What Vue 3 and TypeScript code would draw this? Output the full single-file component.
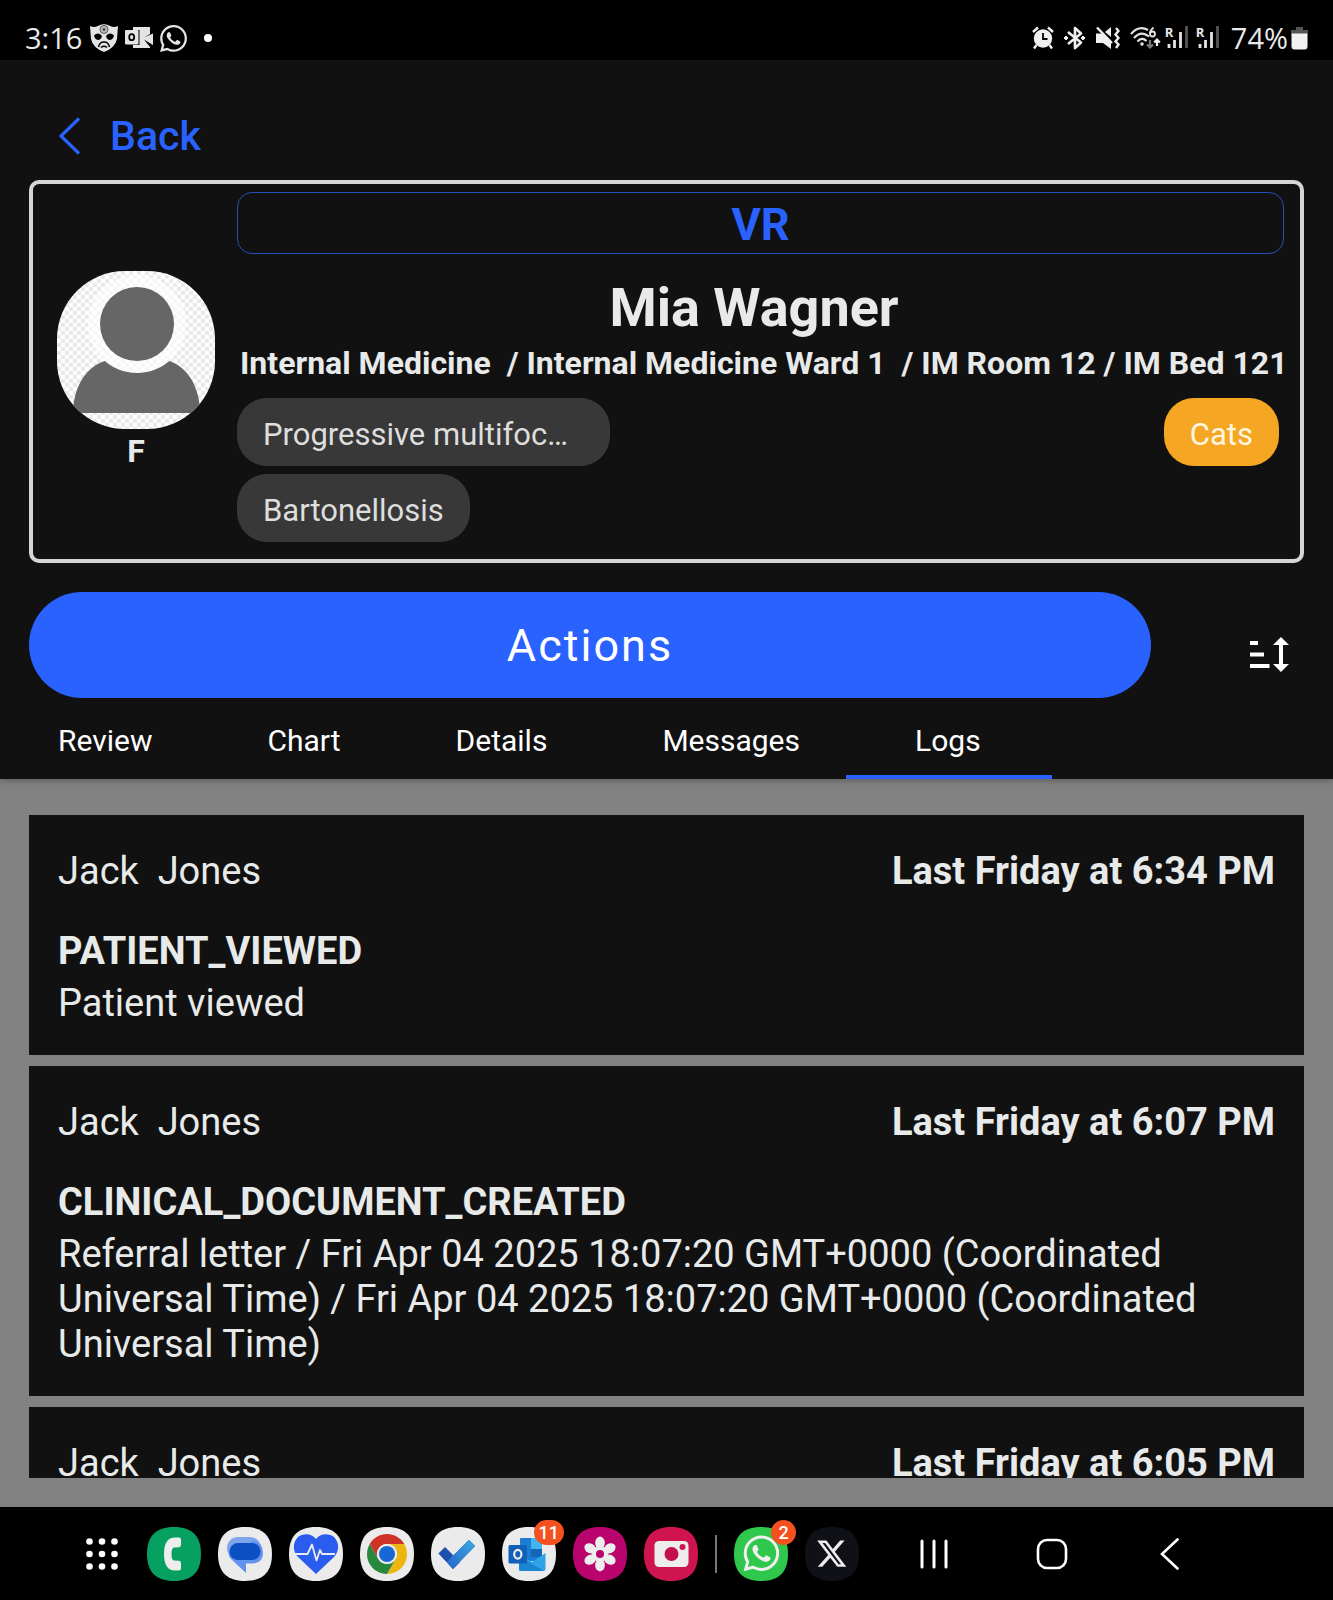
<script setup lang="ts">
import { ref } from 'vue'

interface LogEntry {
  id: number
  author: string
  time: string
  type?: string
  detail?: string
}

const tabs = ['Review', 'Chart', 'Details', 'Messages', 'Logs']
const activeTab = ref('Logs')

const location = 'Internal Medicine  / Internal Medicine Ward 1  / IM Room 12 / IM Bed 121'
const conditions = [
  { label: 'Progressive multifoc…', long: true },
  { label: 'Bartonellosis', long: false },
]
const allergies = ['Cats']

const logs: LogEntry[] = [
  {
    id: 1,
    author: 'Jack  Jones',
    time: 'Last Friday at 6:34 PM',
    type: 'PATIENT_VIEWED',
    detail: 'Patient viewed',
  },
  {
    id: 2,
    author: 'Jack  Jones',
    time: 'Last Friday at 6:07 PM',
    type: 'CLINICAL_DOCUMENT_CREATED',
    detail:
      'Referral letter / Fri Apr 04 2025 18:07:20 GMT+0000 (Coordinated Universal Time) / Fri Apr 04 2025 18:07:20 GMT+0000 (Coordinated Universal Time)',
  },
  {
    id: 3,
    author: 'Jack  Jones',
    time: 'Last Friday at 6:05 PM',
  },
]

const squircle = 'M27 0C45 0 54 9 54 27S45 54 27 54 0 45 0 27 9 0 27 0Z'
const whatsapp =
  'M17.472 14.382c-.297-.149-1.758-.867-2.03-.967-.273-.099-.471-.148-.67.15-.197.297-.767.966-.94 1.164-.173.199-.347.223-.644.075-.297-.15-1.255-.463-2.39-1.475-.883-.788-1.48-1.761-1.653-2.059-.173-.297-.018-.458.13-.606.134-.133.298-.347.446-.52.149-.174.198-.298.298-.497.099-.198.05-.371-.025-.52-.075-.149-.669-1.612-.916-2.207-.242-.579-.487-.5-.669-.51-.173-.008-.371-.01-.57-.01-.198 0-.52.074-.792.372-.272.297-1.04 1.016-1.04 2.479 0 1.462 1.065 2.875 1.213 3.074.149.198 2.096 3.2 5.077 4.487.709.306 1.262.489 1.694.625.712.227 1.36.195 1.871.118.571-.085 1.758-.719 2.006-1.413.248-.694.248-1.289.173-1.413-.074-.124-.272-.198-.57-.347m-5.421 7.403h-.004a9.87 9.87 0 01-5.031-1.378l-.361-.214-3.741.982.998-3.648-.235-.374a9.86 9.86 0 01-1.51-5.26c.001-5.45 4.436-9.884 9.888-9.884 2.64 0 5.122 1.03 6.988 2.898a9.825 9.825 0 012.893 6.994c-.003 5.45-4.437 9.884-9.885 9.884m8.413-18.297A11.815 11.815 0 0012.05 0C5.495 0 .16 5.335.157 11.892c0 2.096.547 4.142 1.588 5.945L.057 24l6.305-1.654a11.882 11.882 0 005.683 1.448h.005c6.554 0 11.89-5.335 11.893-11.893a11.821 11.821 0 00-3.48-8.413z'
const petals = [0, 60, 120, 180, 240, 300]
</script>

<template>
  <div class="screen">
    <div class="status">
      <div class="status-left">
        <span>3:16</span>
        <svg width="28" height="28" viewBox="0 0 28 28" class="mask">
          <path d="M0 2Q5 4 9 1.500Q14-1 19 1.500Q23 4 28 2L27 15Q25 24 14 28Q3 24 1 15Z" fill="#e4e4e4" />
          <circle cx="14" cy="5.500" r="4" fill="#bbb" stroke="#555" stroke-width="1" />
          <circle cx="14" cy="5.500" r="1.300" fill="#333" />
          <path d="M4 11.500Q8 7.500 12 12Q11 16 8 16Q5 15.500 4 11.500ZM24 11.500Q20 7.500 16 12Q17 16 20 16Q23 15.500 24 11.500Z" fill="#000" />
          <path d="M8.500 23Q9.500 18 14 18T19.500 23M11 23.500Q14 21 17 23.500" fill="none" stroke="#000" stroke-width="1.500" />
        </svg>
        <svg width="28" height="22" viewBox="0 0 28 22" class="mail">
          <path d="M8 0H25V7L19 10.500L28 6.500V18L19 12.500L25 20V21H8V18H14.500V3H8Z" fill="#e4e4e4" />
          <rect x="0" y="3" width="13.500" height="14.500" rx="1" fill="#e4e4e4" />
          <ellipse cx="6.700" cy="10.200" rx="2.500" ry="3" fill="none" stroke="#000" stroke-width="1.800" />
        </svg>
        <svg width="27" height="27" viewBox="0 0 24 24" class="wa"><path :d="whatsapp" fill="#e4e4e4" /></svg>
        <i class="dot"></i>
      </div>
      <div class="status-right">
        <svg width="22" height="24" viewBox="0 0 22 24">
          <circle cx="11" cy="12.500" r="9.200" fill="#f0f0f0" />
          <path d="M1 6L6 1.500M21 6L16 1.500M4.500 19L2 22.500M17.500 19L20 22.500" stroke="#f0f0f0" stroke-width="2.400" />
          <path d="M11 7V13H15.500" fill="none" stroke="#000" stroke-width="1.800" />
        </svg>
        <svg width="22" height="24" viewBox="0 0 22 24">
          <path d="M4 6L17 16.500L11 22V2L17 7.500L4 18" fill="none" stroke="#f0f0f0" stroke-width="2.600" stroke-linejoin="round" />
          <path d="M0 12L2 10L4 12L2 14ZM17 12L19 10L21 12L19 14Z" fill="#f0f0f0" stroke="#f0f0f0" />
        </svg>
        <svg width="24" height="24" viewBox="0 0 24 24">
          <path d="M0 7.500H6L15 15.500V23L7 17H0ZM9 6L15 1V11Z" fill="#f0f0f0" />
          <path d="M1 1.500L16 17" stroke="#f0f0f0" stroke-width="2.400" />
          <path d="M20 2L22.500 5L19.500 8.500L22.500 12L19.500 15.500L22.500 18.500L20 22" fill="none" stroke="#f0f0f0" stroke-width="2.400" />
        </svg>
        <svg width="31" height="24" viewBox="0 0 31 24" class="wifi">
          <path d="M1 8Q9-1 18 4M4 12Q11 4 19 10.500M7.500 15.500Q12 10.500 16.500 15" fill="none" stroke="#e4e4e4" stroke-width="2.200" />
          <circle cx="12" cy="18" r="1.800" fill="#e4e4e4" />
          <path d="M23.500 1.500Q19.500 5 20 8" fill="none" stroke="#e4e4e4" stroke-width="1.800" />
          <circle cx="22.500" cy="8" r="2.500" fill="none" stroke="#e4e4e4" stroke-width="1.800" />
          <path d="M20 14V21M17 18.500L20 21.500L23 18.500" fill="none" stroke="#777" stroke-width="2.200" />
          <path d="M27 20V14M24.200 16.500L27 13.500L29.800 16.500" fill="none" stroke="#f0f0f0" stroke-width="2.200" />
        </svg>
        <span v-for="n in 2" :key="n" class="signal">
          <b>R</b>
          <svg width="24" height="24" viewBox="0 0 24 24">
            <path d="M4 18V22M9.500 14V22M15.500 6V22" stroke="#e4e4e4" stroke-width="2.800" />
            <path d="M21.500 0V22" stroke="#555" stroke-width="2.800" />
          </svg>
        </span>
        <span class="percent">74%</span>
        <svg width="17" height="24" viewBox="0 0 17 24">
          <path d="M5 1H12V4H17V9H0V4H5Z" fill="#555" />
          <path d="M1 8H16V21Q16 23 14 23H3Q1 23 1 21Z" fill="#f2f2f2" stroke="#f2f2f2" />
        </svg>
      </div>
    </div>

    <header class="header">
      <button class="back" type="button">
        <svg width="22" height="38" viewBox="0 0 22 38">
          <path d="M20 1.500L2 19L20 36.500" fill="none" stroke="#2962ff" stroke-width="3.200" />
        </svg>
        Back
      </button>

      <section class="patient">
        <div class="identity">
          <svg class="avatar" viewBox="0 0 158 158" width="158" height="158">
            <defs>
              <pattern id="checks" width="8" height="8" patternUnits="userSpaceOnUse">
                <rect width="8" height="8" fill="#fff" />
                <path d="M0 0H4V4H0ZM4 4H8V8H4Z" fill="#e9e9e9" />
              </pattern>
              <mask id="neck">
                <rect width="158" height="158" fill="#fff" />
                <circle cx="80" cy="53" r="49" fill="#000" />
              </mask>
            </defs>
            <rect width="158" height="158" fill="url(#checks)" />
            <circle cx="80" cy="53" r="49" fill="#fff" opacity=".6" />
            <circle cx="80" cy="53" r="37" fill="#666" />
            <path d="M16 142C16 112 34 88 60 88H100C126 88 143 112 143 142Z" fill="#666" mask="url(#neck)" />
          </svg>
          <strong>F</strong>
        </div>
        <div class="summary">
          <div class="code">VR</div>
          <h1>Mia Wagner</h1>
          <p class="location">{{ location }}</p>
          <div class="chips">
            <div class="chip-column">
              <span v-for="c in conditions" :key="c.label" class="chip" :class="{ long: c.long }">{{ c.label }}</span>
            </div>
            <div class="chip-column">
              <span v-for="a in allergies" :key="a" class="chip allergy">{{ a }}</span>
            </div>
          </div>
        </div>
      </section>

      <div class="actions-row">
        <button class="actions" type="button">Actions</button>
        <button class="sort" type="button" aria-label="Sort">
          <svg width="40" height="36" viewBox="0 0 40 36">
            <path d="M0 4H8V8H0ZM0 15.500H14V19.500H0ZM0 27H19.500V31H0Z" fill="#fff" />
            <path d="M31 0L39 8H33V27H39L31 35L23 27H29V8H23Z" fill="#fff" />
          </svg>
        </button>
      </div>

      <nav class="tabs">
        <button
          v-for="tab in tabs"
          :key="tab"
          type="button"
          class="tab"
          :class="{ active: tab === activeTab }"
          @click="activeTab = tab"
        >
          {{ tab }}
        </button>
      </nav>
    </header>

    <main class="content">
      <div class="log-list">
        <article v-for="log in logs" :key="log.id" class="log">
          <div class="log-head">
            <span class="author">{{ log.author }}</span>
            <strong>{{ log.time }}</strong>
          </div>
          <h2 v-if="log.type">{{ log.type }}</h2>
          <p v-if="log.detail">{{ log.detail }}</p>
        </article>
      </div>
    </main>

    <footer class="taskbar">
      <div class="apps">
        <button type="button" class="drawer" aria-label="All apps">
          <svg width="32" height="32" viewBox="0 0 32 32" fill="#fff">
            <template v-for="y in 3" :key="y">
              <circle v-for="x in 3" :key="x" :cx="x * 12.5 - 9" :cy="y * 12.5 - 9" r="3.300" />
            </template>
          </svg>
        </button>
        <button type="button" class="app" aria-label="Phone">
          <svg viewBox="0 0 54 54">
            <path :d="squircle" fill="#06a060" />
            <path d="M28 10.500H32Q34 10.500 34 12.500V18Q34 20 32 20.300L27 20.500Q24.500 21 24.500 27T27 33.500L32 33.700Q34 34 34 36V41.500Q34 43.500 32 43.500H28Q17 43.500 17 27T28 10.500Z" fill="#ededed" />
          </svg>
        </button>
        <button type="button" class="app" aria-label="Messages">
          <svg viewBox="0 0 54 54">
            <path :d="squircle" fill="#ebebeb" />
            <rect x="9" y="10" width="34" height="22" rx="11" fill="#7ea4ea" />
            <path d="M11 26L35 14Q45 15 45 26Q45 36 35 36.500H28V46L13 32Q10 29 11 26Z" fill="#6391ee" />
            <rect x="11.500" y="16" width="31" height="17" rx="8.500" fill="#0b50c2" />
          </svg>
        </button>
        <button type="button" class="app" aria-label="Health">
          <svg viewBox="0 0 54 54">
            <path :d="squircle" fill="#ebebeb" />
            <path d="M27 12C31 6 40 6 45 10C51 16 50 25 45 30L27 47L9 30C4 25 3 16 9 10C14 6 23 6 27 12Z" fill="#2a5cf0" />
            <path d="M5 27H18.500L23 17.500L27.500 33.500L31 23L33 27H46" fill="none" stroke="#ebebeb" stroke-width="1.800" stroke-linejoin="round" />
          </svg>
        </button>
        <button type="button" class="app" aria-label="Chrome">
          <svg viewBox="0 0 54 54">
            <path :d="squircle" fill="#ebebeb" />
            <path d="M9.700 17A20 20 0 0 1 44.300 17H27A10 10 0 0 0 18.300 32Z" fill="#cf3226" />
            <path d="M44.300 17A20 20 0 0 1 27 47L35.700 32A10 10 0 0 0 27 17Z" fill="#ecb50f" />
            <path d="M27 47A20 20 0 0 1 9.700 17L18.300 32A10 10 0 0 0 35.700 32Z" fill="#27893e" />
            <circle cx="27" cy="27" r="10" fill="#ebebeb" />
            <circle cx="27" cy="27" r="8" fill="#1768d2" />
          </svg>
        </button>
        <button type="button" class="app" aria-label="To Do">
          <svg viewBox="0 0 54 54">
            <defs>
              <linearGradient id="tick" x1="0" y1="1" x2="1" y2="0">
                <stop offset="0" stop-color="#2466c8" />
                <stop offset="1" stop-color="#3fa9e4" />
              </linearGradient>
            </defs>
            <path :d="squircle" fill="#ebebeb" />
            <path d="M8 26.500L14 20.500L28.500 35L22 41.500Z" fill="#1c4fae" stroke="#1c4fae" stroke-linejoin="round" />
            <path d="M16 35L38 13L44 19L22 41.500Z" fill="url(#tick)" stroke="url(#tick)" stroke-linejoin="round" />
          </svg>
        </button>
        <button type="button" class="app" aria-label="Outlook">
          <svg viewBox="0 0 54 54">
            <path :d="squircle" fill="#ebebeb" />
            <rect x="18" y="11" width="22" height="23" rx="1" fill="#1a7fd4" />
            <path d="M29 11H40V22H29Z" fill="#42b4ee" />
            <path d="M29 22H40V30H29Z" fill="#1466b8" />
            <path d="M17 27L30 35L43.500 26V42Q43.500 44 41.500 44H19Q17 44 17 42Z" fill="#2ea3e6" />
            <path d="M17 29L42 44H19Q17 44 17 42Z" fill="#1b87d2" />
            <rect x="6.500" y="18" width="18.500" height="18.500" rx="1.500" fill="#1161b8" />
            <ellipse cx="15.800" cy="27.200" rx="3.600" ry="4.400" fill="none" stroke="#ededed" stroke-width="2.200" />
          </svg>
          <span class="badge">11</span>
        </button>
        <button type="button" class="app" aria-label="Gallery">
          <svg viewBox="0 0 54 54">
            <path :d="squircle" fill="#b8046c" />
            <ellipse v-for="a in petals" :key="a" cx="27" cy="15.800" rx="4.800" ry="6.200" fill="#ededed" :transform="`rotate(${a} 27 27)`" />
            <circle cx="27" cy="27" r="8" fill="#ededed" />
            <circle cx="27" cy="27" r="4" fill="#b8046c" />
          </svg>
        </button>
        <button type="button" class="app" aria-label="Camera">
          <svg viewBox="0 0 54 54">
            <path :d="squircle" fill="#d01450" />
            <rect x="10.500" y="14" width="34" height="26" rx="4.500" fill="#ededed" />
            <circle cx="27.500" cy="27" r="7" fill="#c40f48" />
            <circle cx="38.500" cy="20" r="3" fill="#d01450" />
          </svg>
        </button>
        <i class="separator"></i>
        <button type="button" class="app" aria-label="WhatsApp">
          <svg viewBox="0 0 54 54">
            <path :d="squircle" fill="#2fc84c" />
            <g transform="translate(9.500 8.500) scale(1.490)"><path :d="whatsapp" fill="#f0f0f0" /></g>
          </svg>
          <span class="badge">2</span>
        </button>
        <button type="button" class="app" aria-label="X">
          <svg viewBox="0 0 54 54">
            <path :d="squircle" fill="#0f1117" />
            <g transform="translate(10.500 10.500) scale(1.350)">
              <path d="M18.244 2.250h3.308l-7.227 8.260 8.502 11.240H16.170l-5.214-6.817L4.990 21.750H1.680l7.730-8.835L1.254 2.250H8.080l4.713 6.231zm-1.161 17.520h1.833L7.084 4.126H5.117z" fill="#ededed" />
            </g>
          </svg>
        </button>
      </div>
      <div class="system">
        <button type="button" aria-label="Recents">
          <svg width="32" height="32" viewBox="0 0 32 32">
            <path d="M4 3V29M16 3V29M28 3V29" stroke="#fff" stroke-width="3" stroke-linecap="round" />
          </svg>
        </button>
        <button type="button" aria-label="Home">
          <svg width="32" height="32" viewBox="0 0 32 32">
            <rect x="2" y="2" width="28" height="28" rx="9" fill="none" stroke="#fff" stroke-width="2.600" />
          </svg>
        </button>
        <button type="button" aria-label="Back">
          <svg width="32" height="32" viewBox="0 0 32 32">
            <path d="M23.500 1.500L8 16L23.500 30.500" fill="none" stroke="#fff" stroke-width="2.600" stroke-linecap="round" />
          </svg>
        </button>
      </div>
    </footer>
  </div>
</template>

<style>
body {
  margin: 0;
  background: #000;
}
</style>

<style scoped>
.screen {
  display: flex;
  flex-direction: column;
  height: 100vh;
  background: #000;
  color: #e8eaea;
  font-family: Roboto, 'Liberation Sans', sans-serif;
}
svg {
  display: block;
  flex: none;
}
button {
  margin: 0;
  padding: 0;
  border: 0;
  background: none;
  color: inherit;
  font-family: inherit;
  cursor: pointer;
}
h1,
h2,
p {
  margin: 0;
}

.status {
  display: flex;
  justify-content: space-between;
  align-items: center;
  flex: none;
  box-sizing: border-box;
  height: 60px;
  padding: 16px 25px 0;
  font-family: 'Open Sans', 'Noto Sans', sans-serif;
  font-size: 29px;
  line-height: 40px;
}
.status-left,
.status-right {
  display: flex;
  align-items: center;
}
.status-left .mask {
  margin-left: 8px;
}
.status-left .mail,
.status-left .wa {
  margin-left: 7px;
}
.dot {
  width: 8px;
  height: 8px;
  margin-left: 17px;
  border-radius: 50%;
  background: #fff;
}
.status-right {
  gap: 10px;
}
.signal {
  position: relative;
  margin-right: -3px;
}
.signal b {
  position: absolute;
  top: 0;
  left: 0;
  font-size: 13px;
  line-height: 12px;
}
.wifi {
  margin-right: -6px;
}
.percent {
  margin-left: 4px;
  margin-right: -7px;
}

.header {
  position: relative;
  z-index: 1;
  flex: none;
  padding: 0 29px;
  background: #111;
  box-shadow: 0 2px 6px rgba(0, 0, 0, 0.25);
}
.back {
  display: flex;
  align-items: center;
  gap: 29px;
  height: 120px;
  padding: 31px 0 0 30px;
  box-sizing: border-box;
  color: #2962ff;
  font-size: 41px;
  font-weight: 500;
  line-height: 48px;
}
.patient {
  display: flex;
  gap: 22px;
  padding: 8px 16px 17px 24px;
  border: 4px solid #d6d6d6;
  border-radius: 10px;
}
.identity {
  display: flex;
  flex-direction: column;
  align-items: center;
  padding-top: 79px;
  font-size: 32px;
  line-height: 45px;
}
.avatar {
  border-radius: 68px;
}
.summary {
  flex: 1;
  min-width: 0;
}
.code {
  padding-top: 4px;
  border: 1px solid #2450b8;
  border-radius: 15px;
  color: #2962ff;
  font-size: 45px;
  font-weight: 700;
  line-height: 56px;
  text-align: center;
}
h1 {
  padding: 22px 13px 0 0;
  font-size: 54px;
  font-weight: 700;
  line-height: 64px;
  text-align: center;
}
.location {
  padding: 3px 0 14px 3px;
  font-size: 32px;
  font-weight: 700;
  line-height: 41px;
  white-space: pre;
}
.chips {
  display: flex;
  justify-content: space-between;
  padding-right: 5px;
}
.chip-column {
  display: flex;
  flex-direction: column;
  align-items: flex-start;
  gap: 8px;
}
.chip {
  box-sizing: border-box;
  padding: 6px 26px 0;
  border-radius: 30px;
  background: #383838;
  color: #dedede;
  font-size: 31px;
  line-height: 62px;
}
.chip.long {
  width: 373px;
}
.allergy {
  background: #f5a623;
  color: #fff6e0;
}
.actions-row {
  display: flex;
  justify-content: space-between;
  padding: 29px 14px 0 0;
}
.actions {
  flex: 1;
  padding-top: 2px;
  border-radius: 53px;
  background: #2962ff;
  color: #fff;
  font-size: 45px;
  letter-spacing: 2px;
  line-height: 104px;
}
.sort {
  padding: 20px 0 0 99px;
}
.tabs {
  display: flex;
  gap: 115px;
  padding: 0 29px;
}
.tab {
  position: relative;
  padding: 5px 0 0;
  color: #fff;
  font-size: 30px;
  line-height: 76px;
}
.tab.active::after {
  content: '';
  position: absolute;
  right: -71px;
  bottom: 0;
  left: -69px;
  height: 4px;
  background: #2962ff;
}

.content {
  flex: 1;
  min-height: 0;
  box-sizing: border-box;
  padding: 36px 29px 29px;
  background: #818181;
  display: flex;
}
.log-list {
  flex: 1;
  overflow: hidden;
}
.log {
  margin-bottom: 11px;
  padding: 34px 29px 29px;
  background: #111;
  font-size: 38px;
  line-height: 45px;
}
.log-head {
  display: flex;
  justify-content: space-between;
  margin-bottom: 35px;
}
.author {
  white-space: pre;
}
h2 {
  margin-bottom: 7px;
  font-size: 38px;
  font-weight: 700;
}

.taskbar {
  display: flex;
  align-items: center;
  flex: none;
  height: 93px;
  padding: 0 147px 0 86px;
}
.apps {
  display: flex;
  align-items: center;
  gap: 17px;
}
.drawer {
  margin-right: 12px;
}
.app {
  position: relative;
  width: 54px;
  height: 54px;
}
.badge {
  position: absolute;
  top: -7px;
  right: -8px;
  min-width: 25px;
  box-sizing: border-box;
  padding: 0 5px;
  border-radius: 13px;
  background: #f4511e;
  color: #fff;
  font-size: 18px;
  font-weight: 500;
  line-height: 25px;
  text-align: center;
}
.separator {
  width: 2px;
  height: 38px;
  background: #777;
}
.system {
  display: flex;
  flex: 1;
  justify-content: space-between;
  margin-left: 59px;
}
</style>
